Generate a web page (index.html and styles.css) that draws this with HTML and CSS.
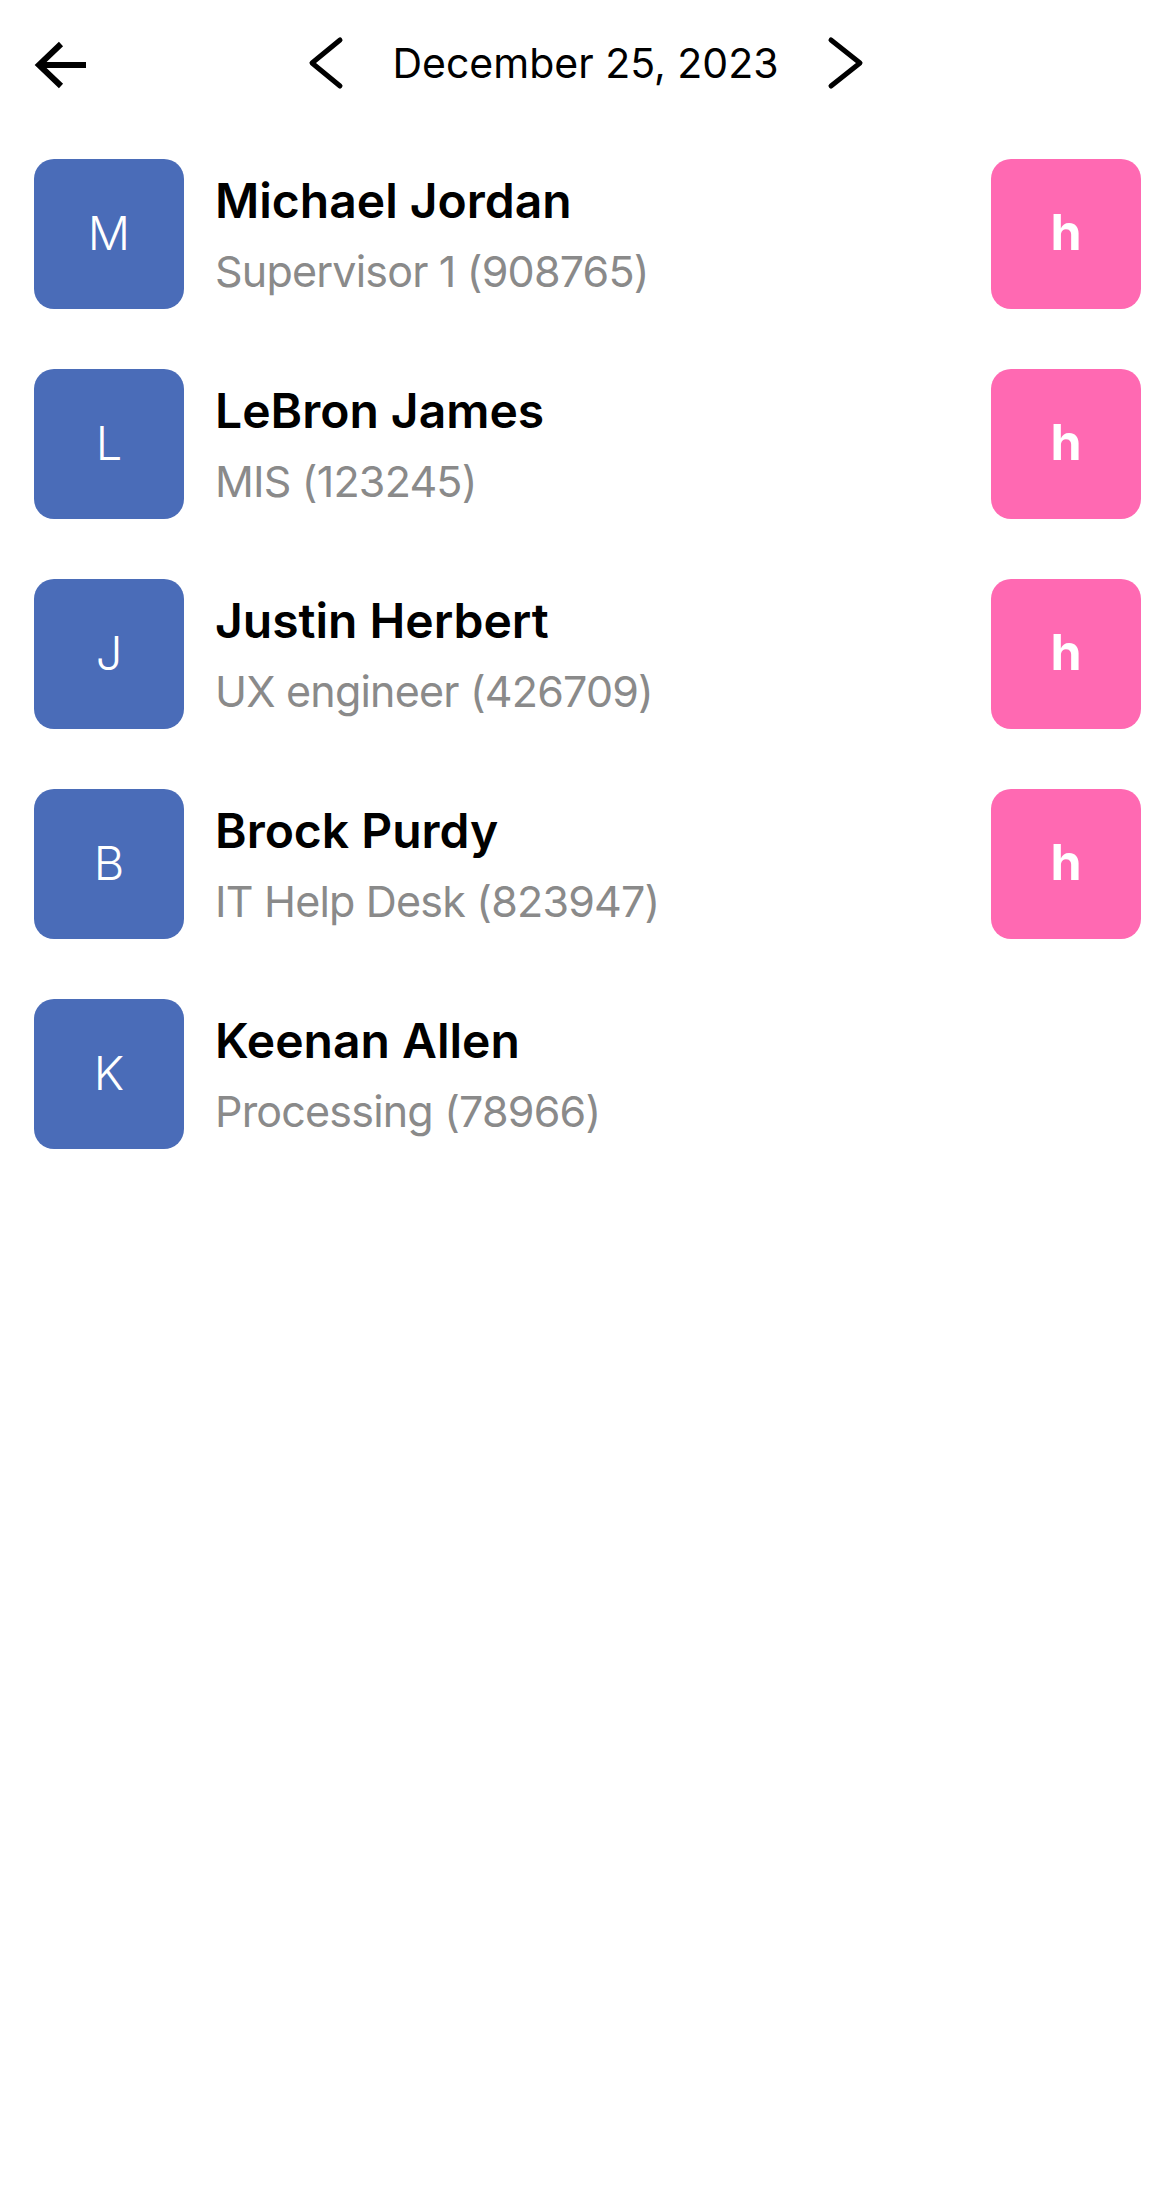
FILE: index.html
```html
<!DOCTYPE html>
<html lang="en">
<head>
<meta charset="utf-8">
<title>Schedule</title>
<link rel="stylesheet" href="styles.css">
</head>
<body>
<div class="page">
  <header class="topbar">
    <div class="topbar-left">
      <button class="icon-btn back" aria-label="Back">
        <svg width="60" height="60" viewBox="0 0 60 60"><path d="M9 31 H56 M31 10 L9 31 L31 52" fill="none" stroke="#000" stroke-width="6" stroke-linejoin="miter" stroke-linecap="butt"/></svg>
      </button>
    </div>
    <div class="date-nav">
      <button class="icon-btn chev" aria-label="Previous day">
        <svg width="40" height="56" viewBox="0 0 40 56"><path d="M33 5 L5 28 L33 51" fill="none" stroke="#000" stroke-width="5" stroke-linecap="round" stroke-linejoin="round"/></svg>
      </button>
      <span class="date">December 25, 2023</span>
      <button class="icon-btn chev" aria-label="Next day">
        <svg width="40" height="56" viewBox="0 0 40 56"><path d="M7 5 L36 28 L7 51" fill="none" stroke="#000" stroke-width="5" stroke-linecap="round" stroke-linejoin="round"/></svg>
      </button>
    </div>
    <div class="topbar-right"></div>
  </header>

  <ul class="people">
    <li class="person">
      <div class="avatar">M</div>
      <div class="info">
        <div class="name">Michael Jordan</div>
        <div class="role">Supervisor 1 (908765)</div>
      </div>
      <div class="tag">h</div>
    </li>
    <li class="person">
      <div class="avatar">L</div>
      <div class="info">
        <div class="name">LeBron James</div>
        <div class="role">MIS (123245)</div>
      </div>
      <div class="tag">h</div>
    </li>
    <li class="person">
      <div class="avatar">J</div>
      <div class="info">
        <div class="name">Justin Herbert</div>
        <div class="role">UX engineer (426709)</div>
      </div>
      <div class="tag">h</div>
    </li>
    <li class="person">
      <div class="avatar">B</div>
      <div class="info">
        <div class="name">Brock Purdy</div>
        <div class="role">IT Help Desk (823947)</div>
      </div>
      <div class="tag">h</div>
    </li>
    <li class="person">
      <div class="avatar">K</div>
      <div class="info">
        <div class="name">Keenan Allen</div>
        <div class="role">Processing (78966)</div>
      </div>
    </li>
  </ul>
</div>
</body>
</html>
```

FILE: styles.css
```css
* { box-sizing: border-box; }

html, body {
  margin: 0;
  padding: 0;
  background: #ffffff;
}

body {
  font-family: Inter, "Noto Sans", "Liberation Sans", sans-serif;
  color: #000;
}

.page {
  min-height: 2194px;
}

.topbar {
  height: 126px;
  display: grid;
  grid-template-columns: 1fr auto 1fr;
  align-items: center;
  padding: 0 34px 0 30px;
}

.icon-btn {
  border: 0;
  background: none;
  padding: 0;
  margin: 0;
  display: flex;
  align-items: center;
  justify-content: center;
  cursor: pointer;
}

.back {
  margin-top: 2px;
}

.date-nav {
  display: flex;
  align-items: center;
  gap: 45px;
}

.date {
  font-size: 41px;
  font-weight: 400;
  line-height: 56px;
  white-space: nowrap;
}

.people {
  list-style: none;
  margin: 0;
  padding: 33px 34px 0 34px;
  display: flex;
  flex-direction: column;
  gap: 60px;
}

.person {
  display: flex;
  align-items: center;
  height: 150px;
}

.avatar {
  width: 150px;
  height: 150px;
  flex: none;
  border-radius: 20px;
  background: #4a6cb8;
  color: #fff;
  display: flex;
  align-items: center;
  justify-content: center;
  padding-bottom: 4px;
  font-size: 47px;
  font-weight: 300;
}

.info {
  flex: 1;
  margin-left: 31px;
  display: flex;
  flex-direction: column;
}

.name {
  font-size: 48px;
  font-weight: 600;
  line-height: 56px;
}

.role {
  margin-top: 17px;
  font-size: 43px;
  font-weight: 400;
  line-height: 50px;
  letter-spacing: -0.8px;
  color: #8a8a8a;
}

.tag {
  width: 150px;
  height: 150px;
  flex: none;
  border-radius: 20px;
  background: #ff69b2;
  color: #fff;
  display: flex;
  align-items: center;
  justify-content: center;
  padding-bottom: 4px;
  font-size: 50px;
  font-weight: 700;
}
```
